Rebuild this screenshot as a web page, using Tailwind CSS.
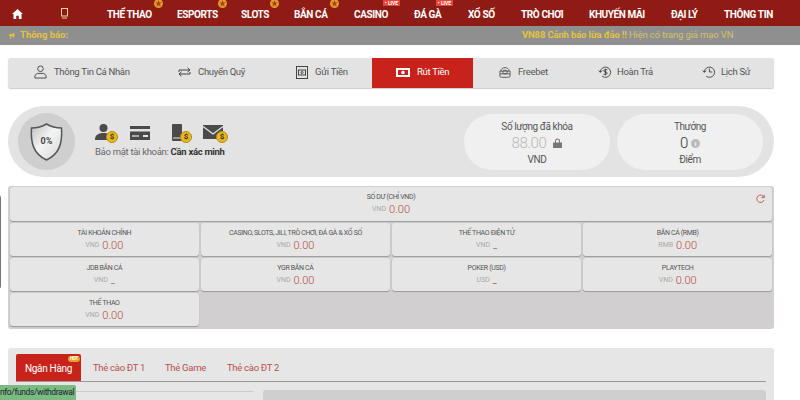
<!DOCTYPE html>
<html lang="en">
<head>
  <meta charset="UTF-8" />
  <title>Rút Tiền</title>
  <script src="https://cdn.jsdelivr.net/npm/@tailwindcss/browser@4"></script>
</head>
<body class="relative h-[400px] w-[800px] overflow-hidden bg-white font-['Roboto','Liberation_Sans',sans-serif] text-[#444]">
  <!-- top nav -->
  <header class="flex h-[26px] items-center bg-[#8e1b14] text-[10px] font-bold tracking-[-0.4px] text-white">
    <div class="flex w-[34px] justify-center pt-[1px]">
      <svg class="h-[10px] w-[11px]" viewBox="0 0 12 11" fill="#fff"><path d="M6 0 0 5.500h1.600V11h3V7.500h2.800V11h3V5.500H12z"/></svg>
    </div>
    <div class="flex w-[60px] justify-center pt-[1px]">
      <svg class="h-[11px] w-[7px]" viewBox="0 0 7 11" fill="none" stroke="#f0d0a0"><rect x=".5" y=".5" width="6" height="7.500"/><path d="M1 10h5"/></svg>
    </div>
    <nav class="ml-[13px] flex gap-[26px]">
      <a class="relative flex h-[26px] w-[44px] items-center whitespace-nowrap pt-[2px]">THỂ THAO
        <svg class="absolute left-[47px] top-[-1px] h-[9px] w-[9px]" viewBox="0 0 10 10"><circle cx="5" cy="5" r="5" fill="#e39a2b"/><path d="M5 1.500 6 4h2.600L6.500 5.600l.8 2.600L5 6.700 2.700 8.200l.8-2.600L1.400 4H4z" fill="#a8401a"/></svg>
      </a>
      <a class="relative flex h-[26px] w-[38px] items-center whitespace-nowrap pt-[2px]">ESPORTS
        <svg class="absolute left-[41px] top-[-1px] h-[9px] w-[9px]" viewBox="0 0 10 10"><circle cx="5" cy="5" r="5" fill="#e39a2b"/><path d="M5 1.500 6 4h2.600L6.500 5.600l.8 2.600L5 6.700 2.700 8.200l.8-2.600L1.400 4H4z" fill="#a8401a"/></svg>
      </a>
      <a class="relative flex h-[26px] w-[27px] items-center whitespace-nowrap pt-[2px]">SLOTS
        <svg class="absolute left-[29px] top-[-1px] h-[9px] w-[9px]" viewBox="0 0 10 10"><circle cx="5" cy="5" r="5" fill="#e39a2b"/><path d="M5 1.500 6 4h2.600L6.500 5.600l.8 2.600L5 6.700 2.700 8.200l.8-2.600L1.400 4H4z" fill="#a8401a"/></svg>
      </a>
      <a class="relative flex h-[26px] w-[34px] items-center whitespace-nowrap pt-[2px]">BẮN CÁ
        <svg class="absolute left-[36px] top-[-1px] h-[9px] w-[9px]" viewBox="0 0 10 10"><circle cx="5" cy="5" r="5" fill="#e39a2b"/><path d="M5 1.500 6 4h2.600L6.500 5.600l.8 2.600L5 6.700 2.700 8.200l.8-2.600L1.400 4H4z" fill="#a8401a"/></svg>
      </a>
      <a class="relative flex h-[26px] w-[34px] items-center whitespace-nowrap pt-[2px]">CASINO
        <span class="absolute left-[29px] top-0 flex h-[6px] w-[17px] items-center justify-center bg-[#e5463a] text-[5px] leading-[6px] tracking-normal">• LIVE</span>
      </a>
      <a class="relative flex h-[26px] w-[28px] items-center whitespace-nowrap pt-[2px]">ĐÁ GÀ
        <span class="absolute left-[22px] top-0 flex h-[6px] w-[17px] items-center justify-center bg-[#e5463a] text-[5px] leading-[6px] tracking-normal">• LIVE</span>
      </a>
      <a class="flex h-[26px] w-[27px] items-center whitespace-nowrap pt-[2px]">XỔ SỐ</a>
      <a class="flex h-[26px] w-[42px] items-center whitespace-nowrap pt-[2px]">TRÒ CHƠI</a>
      <a class="flex h-[26px] w-[56px] items-center whitespace-nowrap pt-[2px]">KHUYẾN MÃI</a>
      <a class="flex h-[26px] w-[27px] items-center whitespace-nowrap pt-[2px]">ĐẠI LÝ</a>
      <a class="flex h-[26px] w-[50px] items-center whitespace-nowrap pt-[2px]">THÔNG TIN</a>
    </nav>
  </header>

  <!-- notice -->
  <div class="flex h-[19px] items-center bg-[#8f8f8f] pl-[9px] text-[9.5px] text-[#e3c33f]">
    <div class="flex w-[513px] items-center">
      <svg class="mr-[3px] h-[8px] w-[8px]" viewBox="0 0 9 8" fill="#e3c33f"><path d="M0 2h3l3-2v6L3 4H0zM1 4.500h1.500V7H1z"/></svg>
      <span class="font-bold">Thông báo:</span>
    </div>
    <span class="whitespace-nowrap tracking-[-0.15px] text-[#d4c06a]"><b class="text-[#e3c33f]">VN88 Cảnh báo lừa đảo !!</b> Hiện có trang giả mạo VN</span>
  </div>

  <main class="mx-[8px] w-[766px]">
    <!-- account tabs -->
    <div class="mt-[13px] flex h-[30px] rounded-[3px] bg-[#e3e3e3] pb-[2px] text-[9.5px] tracking-[-0.3px] text-[#555] shadow-[0_1px_1px_#ccc]">
      <a class="flex w-[122px] items-center gap-[7px] pl-[26px]">
        <svg class="h-[14px] w-[13px] shrink-0" viewBox="0 0 14 14" fill="none" stroke="#444"><circle cx="7" cy="3.500" r="3"/><path d="M1 13.500v-2c0-2 2-2.500 3-3h6c1 .5 3 1 3 3v2z"/></svg>
        <span class="whitespace-nowrap">Thông Tin Cá Nhân</span>
      </a>
      <a class="flex w-[122px] items-center gap-[7px] pl-[48px]">
        <svg class="h-[10px] w-[13px] shrink-0" viewBox="0 0 13 10" fill="none" stroke="#444"><path d="M1 5V3h10M9.500 .8 12 3 9.500 5M12 5v2H2M3.500 4.800 1 7l2.500 2.200"/></svg>
        <span class="whitespace-nowrap">Chuyển Quỹ</span>
      </a>
      <a class="flex w-[120px] items-center gap-[7px] pl-[44px]">
        <svg class="h-[13px] w-[12px] shrink-0" viewBox="0 0 12 13" fill="none" stroke="#444"><rect x=".5" y=".5" width="11" height="12"/><rect x="2.500" y="4" width="7" height="5"/><circle cx="6" cy="6.500" r="1"/></svg>
        <span class="whitespace-nowrap">Gửi Tiền</span>
      </a>
      <a class="mb-[-2px] flex w-[101px] items-center gap-[7px] bg-[#c7231b] pb-[2px] pl-[24px] text-white">
        <svg class="h-[9px] w-[14px] shrink-0" viewBox="0 0 14 9" fill="#fff"><path fill-rule="evenodd" d="M0 0h14v9H0zM2 2v5h10V2z"/><circle cx="7" cy="4.500" r="1.800"/></svg>
        <span class="whitespace-nowrap">Rút Tiền</span>
      </a>
      <a class="flex w-[100px] items-center gap-[7px] pl-[26px]">
        <svg class="h-[13px] w-[12px] shrink-0" viewBox="0 0 13 13" fill="none" stroke="#555"><ellipse cx="6.500" cy="6" rx="2.500" ry="2"/><path d="M1 5h11v3H1zM1 8v3c0 1 11 1 11 0V8M2 5c0-5 9-5 9 0"/></svg>
        <span class="whitespace-nowrap">Freebet</span>
      </a>
      <a class="flex w-[105px] items-center gap-[5px] pl-[25px]">
        <svg class="h-[14px] w-[14px] shrink-0" viewBox="0 0 15 14" fill="none" stroke="#444"><path d="M2.500 7a5.500 5.500 0 1 1 2 4.500M0.800 5.500 2.500 7.500 4.500 5.500"/><path d="M10 4.500H7.500a1.200 1.200 0 0 0 0 2.500h1a1.200 1.200 0 0 1 0 2.500H6M8 3.500v7"/></svg>
        <span class="whitespace-nowrap">Hoàn Trả</span>
      </a>
      <a class="flex w-[96px] items-center gap-[5px] pl-[24px]">
        <svg class="h-[14px] w-[14px] shrink-0" viewBox="0 0 15 14" fill="none" stroke="#444"><path d="M2.500 7a5.500 5.500 0 1 1 2 4.500M0.800 5.500 2.500 7.500 4.500 5.500M8 3.500V7h3"/></svg>
        <span class="whitespace-nowrap">Lịch Sử</span>
      </a>
    </div>

    <!-- security + locked -->
    <section class="mt-[18px] flex h-[71px] items-center rounded-full bg-[#e3e3e3] pl-[10px] pr-[11px]">
      <div class="flex h-[57px] w-[57px] shrink-0 items-center justify-center rounded-full bg-[#cfcfcf]">
        <div class="relative flex h-[38px] w-[35px] items-center justify-center">
          <svg class="absolute inset-0 h-full w-full" viewBox="0 0 34 38">
            <defs><linearGradient id="shieldFill" x1="0" y1="0" x2="1" y2="1"><stop offset="0" stop-color="#bdbdbd"/><stop offset=".45" stop-color="#f4f4f4"/><stop offset="1" stop-color="#d6d6d6"/></linearGradient></defs>
            <path d="M17 1 C22 4 27 5 32 5 C33 20 30 31 17 37 C4 31 1 20 2 5 C7 5 12 4 17 1Z" fill="url(#shieldFill)" stroke="#555" stroke-width="1.500"/>
          </svg>
          <span class="relative text-[9px] font-bold text-[#444]">0%</span>
        </div>
      </div>
      <div class="ml-[20px] w-[133px]">
        <div class="flex h-[20px] items-center">
          <div class="relative h-[18px] w-[22px]">
            <svg class="h-[16px] w-[17px]" viewBox="0 0 17 16" fill="#4a4a4a"><circle cx="8.500" cy="4" r="4"/><path d="M0 16c0-5 3-7 8.500-7s8.500 2 8.500 7z"/></svg>
            <span class="absolute bottom-[-1px] right-[-1px] flex h-[12px] w-[12px] items-center justify-center rounded-full border border-[#b98a10] bg-[#eab91e] text-[8px] font-bold text-[#333]">$</span>
          </div>
          <svg class="ml-[13px] h-[14px] w-[20px]" viewBox="0 0 20 14"><rect width="20" height="14" fill="#4a4a4a"/><rect y="3" width="20" height="2.500" fill="#e3e3e3"/><rect x="2" y="9" width="7" height="2" fill="#aaa"/><rect x="13" y="9" width="5" height="2" fill="#e3e3e3"/></svg>
          <div class="relative ml-[22px] h-[18px] w-[20px]">
            <svg class="h-[17px] w-[10px]" viewBox="0 0 10 17" fill="#4a4a4a"><rect width="10" height="17" rx="1"/><rect x="1" y="13.500" width="8" height="1" fill="#e3e3e3"/></svg>
            <span class="absolute bottom-[-1px] right-0 flex h-[12px] w-[12px] items-center justify-center rounded-full border border-[#b98a10] bg-[#eab91e] text-[8px] font-bold text-[#333]">$</span>
          </div>
          <div class="relative ml-[11px] h-[18px] w-[25px]">
            <svg class="mt-[1px] h-[14px] w-[20px]" viewBox="0 0 20 14"><rect width="20" height="14" fill="#4a4a4a"/><path d="M0 1.500 10 9 20 1.500" fill="none" stroke="#e3e3e3" stroke-width="1.300"/></svg>
            <span class="absolute bottom-[-1px] right-0 flex h-[12px] w-[12px] items-center justify-center rounded-full border border-[#b98a10] bg-[#eab91e] text-[8px] font-bold text-[#333]">$</span>
          </div>
        </div>
        <p class="mt-[2px] whitespace-nowrap text-[9.5px] tracking-[-0.3px] text-[#666]">Bảo mật tài khoản: <b class="text-[#333]">Cần xác minh</b></p>
      </div>
      <div class="ml-auto flex h-[56px] w-[146px] flex-col items-center justify-center rounded-full bg-[#f0f0f0] pt-[3px] text-[10px] leading-[16px] tracking-[-0.4px] text-[#555]">
        <span>Số lượng đã khóa</span>
        <span class="flex items-center gap-[7px] text-[15px] font-light leading-[17px] text-[#b8b8b8]">88.00
          <svg class="h-[10px] w-[9px]" viewBox="0 0 9 10" fill="#777"><path d="M0 4.500h9V10H0zM2 4.500V3a2.500 2.500 0 0 1 5 0v1.500H6V3a1.500 1.500 0 0 0-3 0v1.500z"/></svg>
        </span>
        <span>VND</span>
      </div>
      <div class="ml-[7px] flex h-[56px] w-[146px] flex-col items-center justify-center rounded-full bg-[#f0f0f0] pt-[3px] text-[10px] leading-[16px] tracking-[-0.4px] text-[#555]">
        <span>Thưởng</span>
        <span class="flex items-center gap-[3px] text-[15px] font-light leading-[17px] text-[#333]">0
          <span class="flex h-[9px] w-[9px] items-center justify-center rounded-full bg-[#bbb] text-[6px] font-bold text-white">i</span>
        </span>
        <span>Điểm</span>
      </div>
    </section>

    <!-- balances -->
    <section class="mt-[9px] rounded-[3px] bg-[#d1cfcf] px-[2px] pb-[3px] pt-[1px]">
      <div class="relative flex h-[34px] flex-col items-center justify-center rounded-[3px] bg-[#e6e6e6] pt-[2px] shadow-[0_1px_1px_#999]">
        <span class="text-[7px] leading-[11px] tracking-[-0.35px] text-[#555]">SỐ DƯ (CHỈ VND)</span>
        <span class="flex items-baseline gap-[3px] text-[11px] font-light leading-[13px] text-[#b5483f]"><i class="relative top-[-2px] text-[7px] font-normal not-italic text-[#aaa]">VND</i>0.00</span>
        <svg class="absolute right-[7px] top-[7px] h-[9px] w-[9px]" viewBox="0 0 9 9" fill="none" stroke="#c0635c"><path d="M8 3.500A3.700 3.700 0 1 0 8 6M8.200 .8v2.800H5.500"/></svg>
      </div>
      <div class="mt-[2px] grid grid-cols-4 gap-x-[2.500px] gap-y-[2px]">
        <div class="flex h-[33px] flex-col items-center justify-center rounded-[3px] bg-[#e6e6e6] pt-[2px] shadow-[0_1px_1px_#999]">
          <span class="text-[7px] leading-[11px] tracking-[-0.35px] text-[#555]">TÀI KHOẢN CHÍNH</span>
          <span class="flex items-baseline gap-[3px] text-[11px] font-light leading-[13px] text-[#b5483f]"><i class="relative top-[-2px] text-[7px] font-normal not-italic text-[#aaa]">VND</i>0.00</span>
        </div>
        <div class="flex h-[33px] flex-col items-center justify-center rounded-[3px] bg-[#e6e6e6] pt-[2px] shadow-[0_1px_1px_#999]">
          <span class="whitespace-nowrap text-[7px] leading-[11px] tracking-[-0.35px] text-[#555]">CASINO, SLOTS, JILI, TRÒ CHƠI, ĐÁ GÀ &amp; XỔ SỐ</span>
          <span class="flex items-baseline gap-[3px] text-[11px] font-light leading-[13px] text-[#b5483f]"><i class="relative top-[-2px] text-[7px] font-normal not-italic text-[#aaa]">VND</i>0.00</span>
        </div>
        <div class="flex h-[33px] flex-col items-center justify-center rounded-[3px] bg-[#e6e6e6] pt-[2px] shadow-[0_1px_1px_#999]">
          <span class="text-[7px] leading-[11px] tracking-[-0.35px] text-[#555]">THỂ THAO ĐIỆN TỬ</span>
          <span class="flex items-baseline gap-[3px] text-[9px] leading-[13px] text-[#777]"><i class="relative top-[-1px] text-[7px] not-italic text-[#aaa]">VND</i>_</span>
        </div>
        <div class="flex h-[33px] flex-col items-center justify-center rounded-[3px] bg-[#e6e6e6] pt-[2px] shadow-[0_1px_1px_#999]">
          <span class="text-[7px] leading-[11px] tracking-[-0.35px] text-[#555]">BẮN CÁ (RMB)</span>
          <span class="flex items-baseline gap-[3px] text-[11px] font-light leading-[13px] text-[#b5483f]"><i class="relative top-[-2px] text-[7px] font-normal not-italic text-[#aaa]">RMB</i>0.00</span>
        </div>
        <div class="flex h-[33px] flex-col items-center justify-center rounded-[3px] bg-[#e6e6e6] pt-[2px] shadow-[0_1px_1px_#999]">
          <span class="text-[7px] leading-[11px] tracking-[-0.35px] text-[#555]">JDB BẮN CÁ</span>
          <span class="flex items-baseline gap-[3px] text-[9px] leading-[13px] text-[#777]"><i class="relative top-[-1px] text-[7px] not-italic text-[#aaa]">VND</i>_</span>
        </div>
        <div class="flex h-[33px] flex-col items-center justify-center rounded-[3px] bg-[#e6e6e6] pt-[2px] shadow-[0_1px_1px_#999]">
          <span class="text-[7px] leading-[11px] tracking-[-0.35px] text-[#555]">YGR BẮN CÁ</span>
          <span class="flex items-baseline gap-[3px] text-[11px] font-light leading-[13px] text-[#b5483f]"><i class="relative top-[-2px] text-[7px] font-normal not-italic text-[#aaa]">VND</i>0.00</span>
        </div>
        <div class="flex h-[33px] flex-col items-center justify-center rounded-[3px] bg-[#e6e6e6] pt-[2px] shadow-[0_1px_1px_#999]">
          <span class="text-[7px] leading-[11px] tracking-[-0.35px] text-[#555]">POKER (USD)</span>
          <span class="flex items-baseline gap-[3px] text-[9px] leading-[13px] text-[#b5483f]"><i class="relative top-[-1px] text-[7px] not-italic text-[#aaa]">USD</i>_</span>
        </div>
        <div class="flex h-[33px] flex-col items-center justify-center rounded-[3px] bg-[#e6e6e6] pt-[2px] shadow-[0_1px_1px_#999]">
          <span class="text-[7px] leading-[11px] tracking-[-0.35px] text-[#555]">PLAYTECH</span>
          <span class="flex items-baseline gap-[3px] text-[11px] font-light leading-[13px] text-[#b5483f]"><i class="relative top-[-2px] text-[7px] font-normal not-italic text-[#aaa]">VND</i>0.00</span>
        </div>
        <div class="flex h-[33px] flex-col items-center justify-center rounded-[3px] bg-[#e6e6e6] pt-[2px] shadow-[0_1px_1px_#999]">
          <span class="text-[7px] leading-[11px] tracking-[-0.35px] text-[#555]">THỂ THAO</span>
          <span class="flex items-baseline gap-[3px] text-[11px] font-light leading-[13px] text-[#b5483f]"><i class="relative top-[-2px] text-[7px] font-normal not-italic text-[#aaa]">VND</i>0.00</span>
        </div>
      </div>
    </section>

    <!-- withdrawal panel -->
    <section class="mt-[19px] h-[60px] rounded-[3px] bg-[#e6e6e6] px-[8px] pt-[7px]">
      <div class="flex h-[27px] items-end border-b border-[#999] text-[9.5px] tracking-[-0.3px] text-[#b5514c]">
        <a class="relative flex h-[27px] w-[65px] items-center justify-center rounded-t-[2px] bg-[#c7231b] pt-[1px] text-[10px] text-white">Ngân Hàng
          <span class="absolute right-[1px] top-[2px] rounded-[3px] bg-[#e8a020] px-[2px] text-[4.500px] font-bold leading-[6px]">HOT</span>
        </a>
        <a class="ml-[12px] w-[50px] self-center whitespace-nowrap">Thẻ cào ĐT 1</a>
        <a class="ml-[22px] w-[40px] self-center whitespace-nowrap">Thẻ Game</a>
        <a class="ml-[22px] w-[51px] self-center whitespace-nowrap">Thẻ cào ĐT 2</a>
      </div>
      <div class="mt-[8px] flex">
        <div class="mt-[1px] h-px w-[237px] bg-[#ccc]"></div>
        <div class="ml-[10px] h-[20px] grow rounded-t-[3px] bg-[#cfcfcf]"></div>
      </div>
    </section>
  </main>

  <!-- browser status link preview -->
  <div class="absolute bottom-0 left-0 flex h-[15px] w-[76px] items-center overflow-hidden rounded-tr-[2px] bg-[#79bb80] text-[8.500px] tracking-[-0.4px] text-[#223]">
    <span class="whitespace-nowrap">nfo/funds/withdrawal</span>
  </div>
  <!-- edge of a side widget -->
  <div class="absolute left-[-3px] top-[195px] h-[94px] w-[4px] rounded-r-[3px] bg-[#777]"></div>
</body>
</html>
